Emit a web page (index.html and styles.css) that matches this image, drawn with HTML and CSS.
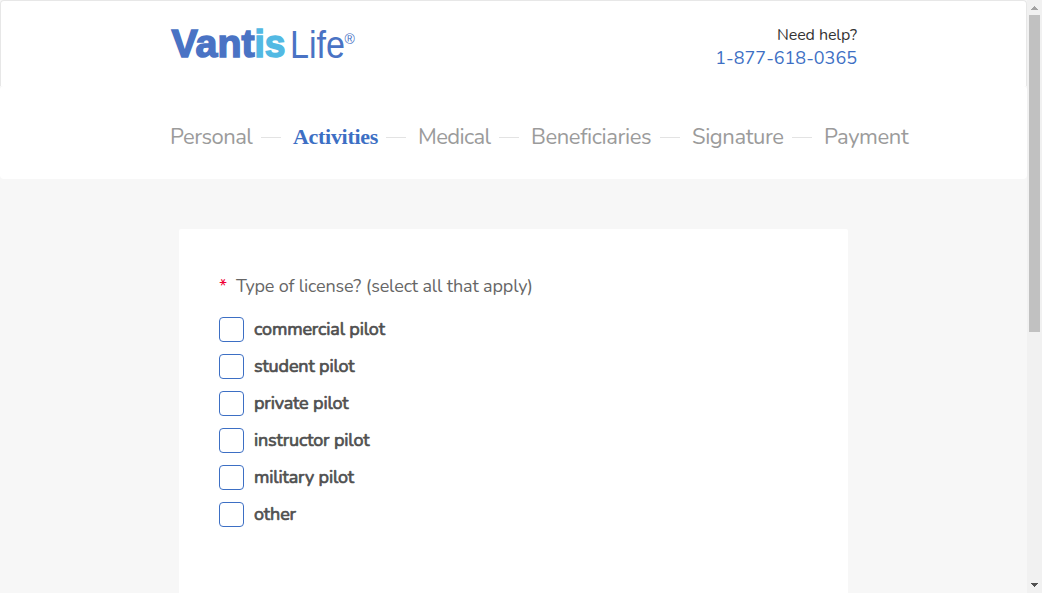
FILE: index.html
```html
<!DOCTYPE html>
<html lang="en">
<head>
<meta charset="utf-8">
<title>Vantis Life</title>
<link rel="stylesheet" href="styles.css">
</head>
<body>
<div class="window">
  <div class="page">
    <header class="header">
      <svg class="logo" width="190" height="44" viewBox="0 0 190 44" role="img" aria-label="Vantis Life">
        <g class="logo-bold">
          <text x="1.5" y="36.4" textLength="83" lengthAdjust="spacingAndGlyphs">Vant</text>
          <text class="logo-cyan" x="84.5" y="36.4" textLength="31" lengthAdjust="spacingAndGlyphs">is</text>
        </g>
        <text class="logo-light" x="120" y="37"><tspan textLength="55" lengthAdjust="spacingAndGlyphs">Life</tspan><tspan class="logo-reg" x="174.5" y="23">®</tspan></text>
      </svg>
      <div class="help">
        <div class="help-title">Need help?</div>
        <a class="help-phone">1-877-618-0365</a>
      </div>
    </header>
    <nav class="steps">
      <span class="step personal">Personal</span>
      <span class="step active">Activities</span>
      <span class="step medical">Medical</span>
      <span class="step beneficiaries">Beneficiaries</span>
      <span class="step signature">Signature</span>
      <span class="step payment">Payment</span>
    </nav>
    <main class="card">
      <div class="question"><span class="required">*</span><span>Type of license? (select all that apply)</span></div>
      <div class="options">
        <label class="option"><i class="box"></i><span>commercial pilot</span></label>
        <label class="option"><i class="box"></i><span>student pilot</span></label>
        <label class="option"><i class="box"></i><span>private pilot</span></label>
        <label class="option"><i class="box"></i><span>instructor pilot</span></label>
        <label class="option"><i class="box"></i><span>military pilot</span></label>
        <label class="option"><i class="box"></i><span>other</span></label>
      </div>
    </main>
  </div>
  <div class="scrollbar">
    <svg width="15" height="15" shape-rendering="crispEdges"><path d="M4 10h7v-1h-1v-1h-1v-1h-1v-1h-1v1h-1v1h-1v1h-1z" fill="#a3a3a3"/></svg>
    <div class="thumb"></div>
    <svg class="down" width="15" height="15" shape-rendering="crispEdges"><path d="M4 5h7v1h-1v1h-1v1h-1v1h-1v-1h-1v-1h-1v-1h-1z" fill="#505050"/></svg>
  </div>
</div>
</body>
</html>
```
FILE: styles.css
```css
* { box-sizing: border-box; }
body { margin: 0; font-family: Nunito, Lato, sans-serif; overflow: hidden; }
.window { display: grid; grid-template-columns: 1fr 15px; height: 593px; }
.page { display: flex; flex-direction: column; background: #f7f7f7; min-width: 0; overflow: hidden; }
.header {
  height: 86px; flex: none; display: flex; justify-content: space-between;
  padding: 20px 169px 0; background: #fff;
  border: 1px solid #e7e7e7; border-bottom: 0; border-radius: 4px 4px 0 0;
}
.logo { overflow: visible; }
.logo-bold { font: 700 39px "Liberation Sans", sans-serif; fill: #4a73c4; stroke: #4a73c4; stroke-width: 1.5; }
.logo-cyan { fill: #52b9e3; stroke: #52b9e3; }
.logo-light { font: 400 38px "Liberation Sans", sans-serif; fill: #4a73c4; }
.logo-reg { font-size: 14px; }
.help { text-align: right; padding-top: 3px; }
.help-title { font-size: 16px; line-height: 22px; color: #333; letter-spacing: -.07px; }
.help-phone { display: block; font-size: 18px; line-height: 24px; color: #3d6fc4; }
.steps {
  height: 93px; flex: none; display: flex; align-items: flex-start;
  padding: 36px 0 0 170px; background: #fff; border-radius: 4px;
  font-size: 22px; line-height: 30px; letter-spacing: -.5px; color: #9b9b9b; white-space: nowrap;
}
.step { position: relative; margin-right: 40px; width: 83px; }
.step:not(:last-child)::after {
  content: ""; position: absolute; left: calc(100% + 8px); top: 15px;
  width: 20px; height: 1px; background: #e3e3e3;
}
.active { width: 85px; font-family: "Liberation Serif", serif; font-weight: 700; letter-spacing: -.3px; color: #3d6fc4; }
.medical { width: 73px; letter-spacing: -.6px; }
.beneficiaries { width: 121px; letter-spacing: -.4px; }
.signature { width: 92px; letter-spacing: -.4px; }
.payment { width: 84px; margin: 0; letter-spacing: -.4px; }
.card { margin: 50px 179px 0; padding: 44px 40px 0; flex: 1; background: #fff; border-radius: 2px 2px 0 0; }
.question { display: flex; font-size: 18px; line-height: 26px; letter-spacing: -.15px; color: #666; }
.required { width: 17px; color: #f00034; }
.options { display: flex; flex-direction: column; gap: 12px; padding-top: 18px; }
.option {
  display: flex; gap: 10px; height: 25px; font-size: 18px; line-height: 24px;
  color: #505050; -webkit-text-stroke: .7px #505050; letter-spacing: -.14px;
}
.box { width: 25px; height: 25px; border: 1px solid #3d6fc4; border-radius: 4px; background: #fff; }
.scrollbar { display: flex; flex-direction: column; background: #f1f1f1; }
.thumb { width: 11px; height: 317px; margin-left: 2px; background: #c1c1c1; }
.down { margin-top: auto; }
```
